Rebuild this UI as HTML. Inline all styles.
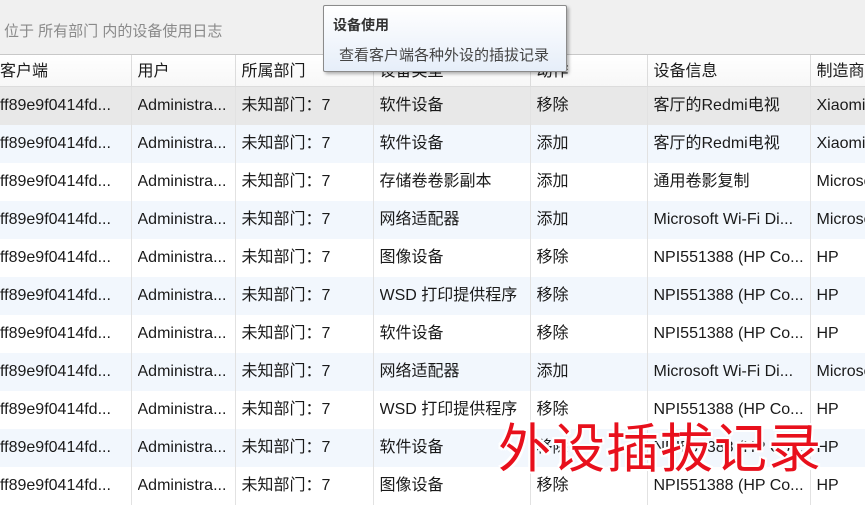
<!DOCTYPE html>
<html><head><meta charset="utf-8"><style>
*{margin:0;padding:0;box-sizing:border-box}
body{width:865px;height:499px;overflow:hidden;background:#fff;font-family:"Liberation Sans","Noto Sans CJK SC",sans-serif;font-size:16px;color:#1a1a1a;position:relative}
.top{position:absolute;left:0;top:0;width:865px;height:55px;background:#f0f0f0;border-bottom:1px solid #c8c8c8}
.top span{position:absolute;left:4px;top:20px;font-size:15px;color:#8a8a8a}
table{position:absolute;left:0;top:55px;border-collapse:collapse;table-layout:fixed;width:900px}
td{height:38px;padding-left:6px;white-space:nowrap;overflow:hidden;border-right:1px solid #e2e2e2;vertical-align:middle;line-height:20px}
td div{height:38px;line-height:38px;overflow:hidden}
td:first-child{padding-left:0}
tr.h td{height:31px;padding-top:4px;background:linear-gradient(#fff,#f7f7f7);border-bottom:1px solid #dcdcdc;border-right:1px solid #dcdcdc}
tr.s td{background:#e8e8e8}
tr.b td{background:#f2f7fd}
.tip{position:absolute;left:323px;top:5px;width:244px;height:67px;background:linear-gradient(#fff,#e6eef9);border:1px solid #8b8b8b;border-radius:2px;box-shadow:2px 2px 3px rgba(0,0,0,.3)}
.tip b{position:absolute;left:9px;top:9px;font-size:14px;color:#333}
.tip span{position:absolute;left:15px;top:38px;font-size:15px;color:#444}
.big{position:absolute;left:498px;top:410px;font-size:53px;line-height:70px;color:#e8101c;letter-spacing:1px;font-family:"Noto Sans CJK SC",sans-serif;font-weight:400;text-shadow:-2px -2px 0 #fff,2px -2px 0 #fff,-2px 2px 0 #fff,2px 2px 0 #fff,0 2px 0 #fff,0 -2px 0 #fff,2px 0 0 #fff,-2px 0 0 #fff}
</style></head><body>
<div class="top"><span>位于 所有部门 内的设备使用日志</span></div>
<table>
<colgroup><col style="width:131px"><col style="width:104px"><col style="width:138px"><col style="width:157px"><col style="width:117px"><col style="width:163px"><col style="width:90px"></colgroup>
<tr class="h"><td>客户端</td><td>用户</td><td>所属部门</td><td>设备类型</td><td>动作</td><td>设备信息</td><td>制造商</td></tr>
<tr class="s"><td><div>ff89e9f0414fd...</div></td><td><div>Administra...</div></td><td><div>未知部门：7</div></td><td><div>软件设备</div></td><td><div>移除</div></td><td><div>客厅的Redmi电视</div></td><td><div>Xiaomi</div></td></tr>
<tr class="b"><td><div>ff89e9f0414fd...</div></td><td><div>Administra...</div></td><td><div>未知部门：7</div></td><td><div>软件设备</div></td><td><div>添加</div></td><td><div>客厅的Redmi电视</div></td><td><div>Xiaomi</div></td></tr>
<tr><td><div>ff89e9f0414fd...</div></td><td><div>Administra...</div></td><td><div>未知部门：7</div></td><td><div>存储卷卷影副本</div></td><td><div>添加</div></td><td><div>通用卷影复制</div></td><td><div>Microsoft</div></td></tr>
<tr class="b"><td><div>ff89e9f0414fd...</div></td><td><div>Administra...</div></td><td><div>未知部门：7</div></td><td><div>网络适配器</div></td><td><div>添加</div></td><td><div>Microsoft Wi-Fi Di...</div></td><td><div>Microsoft</div></td></tr>
<tr><td><div>ff89e9f0414fd...</div></td><td><div>Administra...</div></td><td><div>未知部门：7</div></td><td><div>图像设备</div></td><td><div>移除</div></td><td><div>NPI551388 (HP Co...</div></td><td><div>HP</div></td></tr>
<tr class="b"><td><div>ff89e9f0414fd...</div></td><td><div>Administra...</div></td><td><div>未知部门：7</div></td><td><div>WSD 打印提供程序</div></td><td><div>移除</div></td><td><div>NPI551388 (HP Co...</div></td><td><div>HP</div></td></tr>
<tr><td><div>ff89e9f0414fd...</div></td><td><div>Administra...</div></td><td><div>未知部门：7</div></td><td><div>软件设备</div></td><td><div>移除</div></td><td><div>NPI551388 (HP Co...</div></td><td><div>HP</div></td></tr>
<tr class="b"><td><div>ff89e9f0414fd...</div></td><td><div>Administra...</div></td><td><div>未知部门：7</div></td><td><div>网络适配器</div></td><td><div>添加</div></td><td><div>Microsoft Wi-Fi Di...</div></td><td><div>Microsoft</div></td></tr>
<tr><td><div>ff89e9f0414fd...</div></td><td><div>Administra...</div></td><td><div>未知部门：7</div></td><td><div>WSD 打印提供程序</div></td><td><div>移除</div></td><td><div>NPI551388 (HP Co...</div></td><td><div>HP</div></td></tr>
<tr class="b"><td><div>ff89e9f0414fd...</div></td><td><div>Administra...</div></td><td><div>未知部门：7</div></td><td><div>软件设备</div></td><td><div>移除</div></td><td><div>NPI551388 (HP Co...</div></td><td><div>HP</div></td></tr>
<tr><td><div>ff89e9f0414fd...</div></td><td><div>Administra...</div></td><td><div>未知部门：7</div></td><td><div>图像设备</div></td><td><div>移除</div></td><td><div>NPI551388 (HP Co...</div></td><td><div>HP</div></td></tr>
</table>
<div class="tip"><b>设备使用</b><span>查看客户端各种外设的插拔记录</span></div>
<div class="big">外设插拔记录</div>
</body></html>
